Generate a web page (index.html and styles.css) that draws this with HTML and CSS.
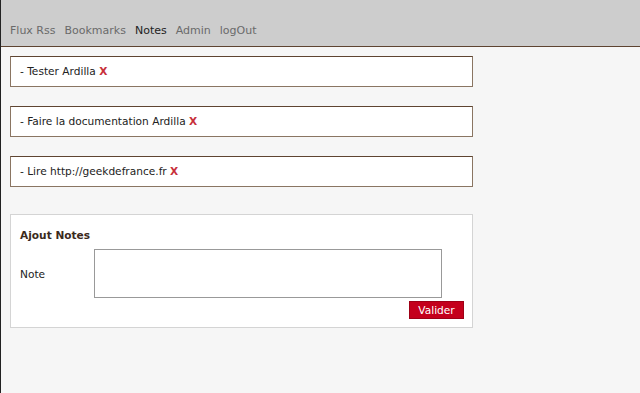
FILE: index.html
```html
<!doctype html>
<html lang="fr">
  <head>
    <meta charset="UTF-8" />
    <title>Notes</title>
    <link rel="stylesheet" href="styles.css">
  </head>
  <body>
    <div id="header">
      <ul class="menu">
        <li><a href="#">Flux Rss</a></li>
        <li><a href="#">Bookmarks</a></li>
        <li><a href="#" class="current">Notes</a></li>
        <li><a href="#">Admin</a></li>
        <li><a href="#">logOut</a></li>
      </ul>
    </div>

    <div id="content">
      <div class="note">- Tester Ardilla <a href="#" class="delete">X</a></div>
      <div class="note">- Faire la documentation Ardilla <a href="#" class="delete">X</a></div>
      <div class="note">- Lire http://geekdefrance.fr <a href="#" class="delete">X</a></div>

      <form class="add-form">
        <div class="form-title">Ajout Notes</div>
        <div class="form-row">
          <label for="note">Note</label>
          <textarea id="note"></textarea>
        </div>
        <div class="form-actions">
          <button type="button" class="btn-submit">Valider</button>
        </div>
      </form>
    </div>
  </body>
</html>
```

FILE: styles.css
```css
/* Base */
html,
body {
  height: 100%;
}

body {
  margin: 0;
  font-family: "DejaVu Sans", Verdana, sans-serif;
  font-size: 10.6px;
  color: #222;
  background-color: #f6f6f6;
  border-left: 1px solid #222;
  box-sizing: border-box;
}

/* Header menu */
#header {
  height: 46px;
  background-color: #cdcdcd;
  border-bottom: 1px solid #5e4431;
  box-sizing: content-box;
}

.menu {
  display: flex;
  gap: 9px;
  margin: 0;
  padding: 23px 0 0 9px;
  list-style: none;
  font-size: 11px;
  line-height: 15px;
}

.menu a {
  color: #6a6a6a;
  text-decoration: none;
}

.menu a.current {
  color: #222;
}

/* Notes list */
#content {
  padding: 9px 0 0 9px;
  width: 463px;
}

.note {
  background-color: #fff;
  border: 1px solid #8a7562;
  border-top-color: #5e4431;
  padding: 8px 9px;
  line-height: 13px;
  margin-bottom: 19px;
}

.delete {
  color: #c8303a;
  font-weight: bold;
  text-decoration: none;
}

/* Add form */
.add-form {
  margin-top: 27px;
  background-color: #fff;
  border: 1px solid #d4d4d4;
  padding: 14px 8px 8px 9px;
}

.form-title {
  font-weight: bold;
  color: #3b2a1c;
  line-height: 13px;
  margin-bottom: 7px;
}

.form-row {
  display: flex;
  align-items: center;
}

.form-row label {
  width: 74px;
}

.form-row textarea {
  width: 348px;
  height: 49px;
  box-sizing: border-box;
  border: 1px solid #999;
  resize: none;
  margin: 0;
  padding: 2px;
}

.form-actions {
  display: flex;
  justify-content: flex-end;
  margin-top: 3px;
}

.btn-submit {
  width: 55px;
  height: 18px;
  padding: 0;
  border: 1px solid #9e0016;
  background-color: #c4001c;
  color: #fff;
  font-family: "DejaVu Sans", Verdana, sans-serif;
  font-size: 10.6px;
}
```
